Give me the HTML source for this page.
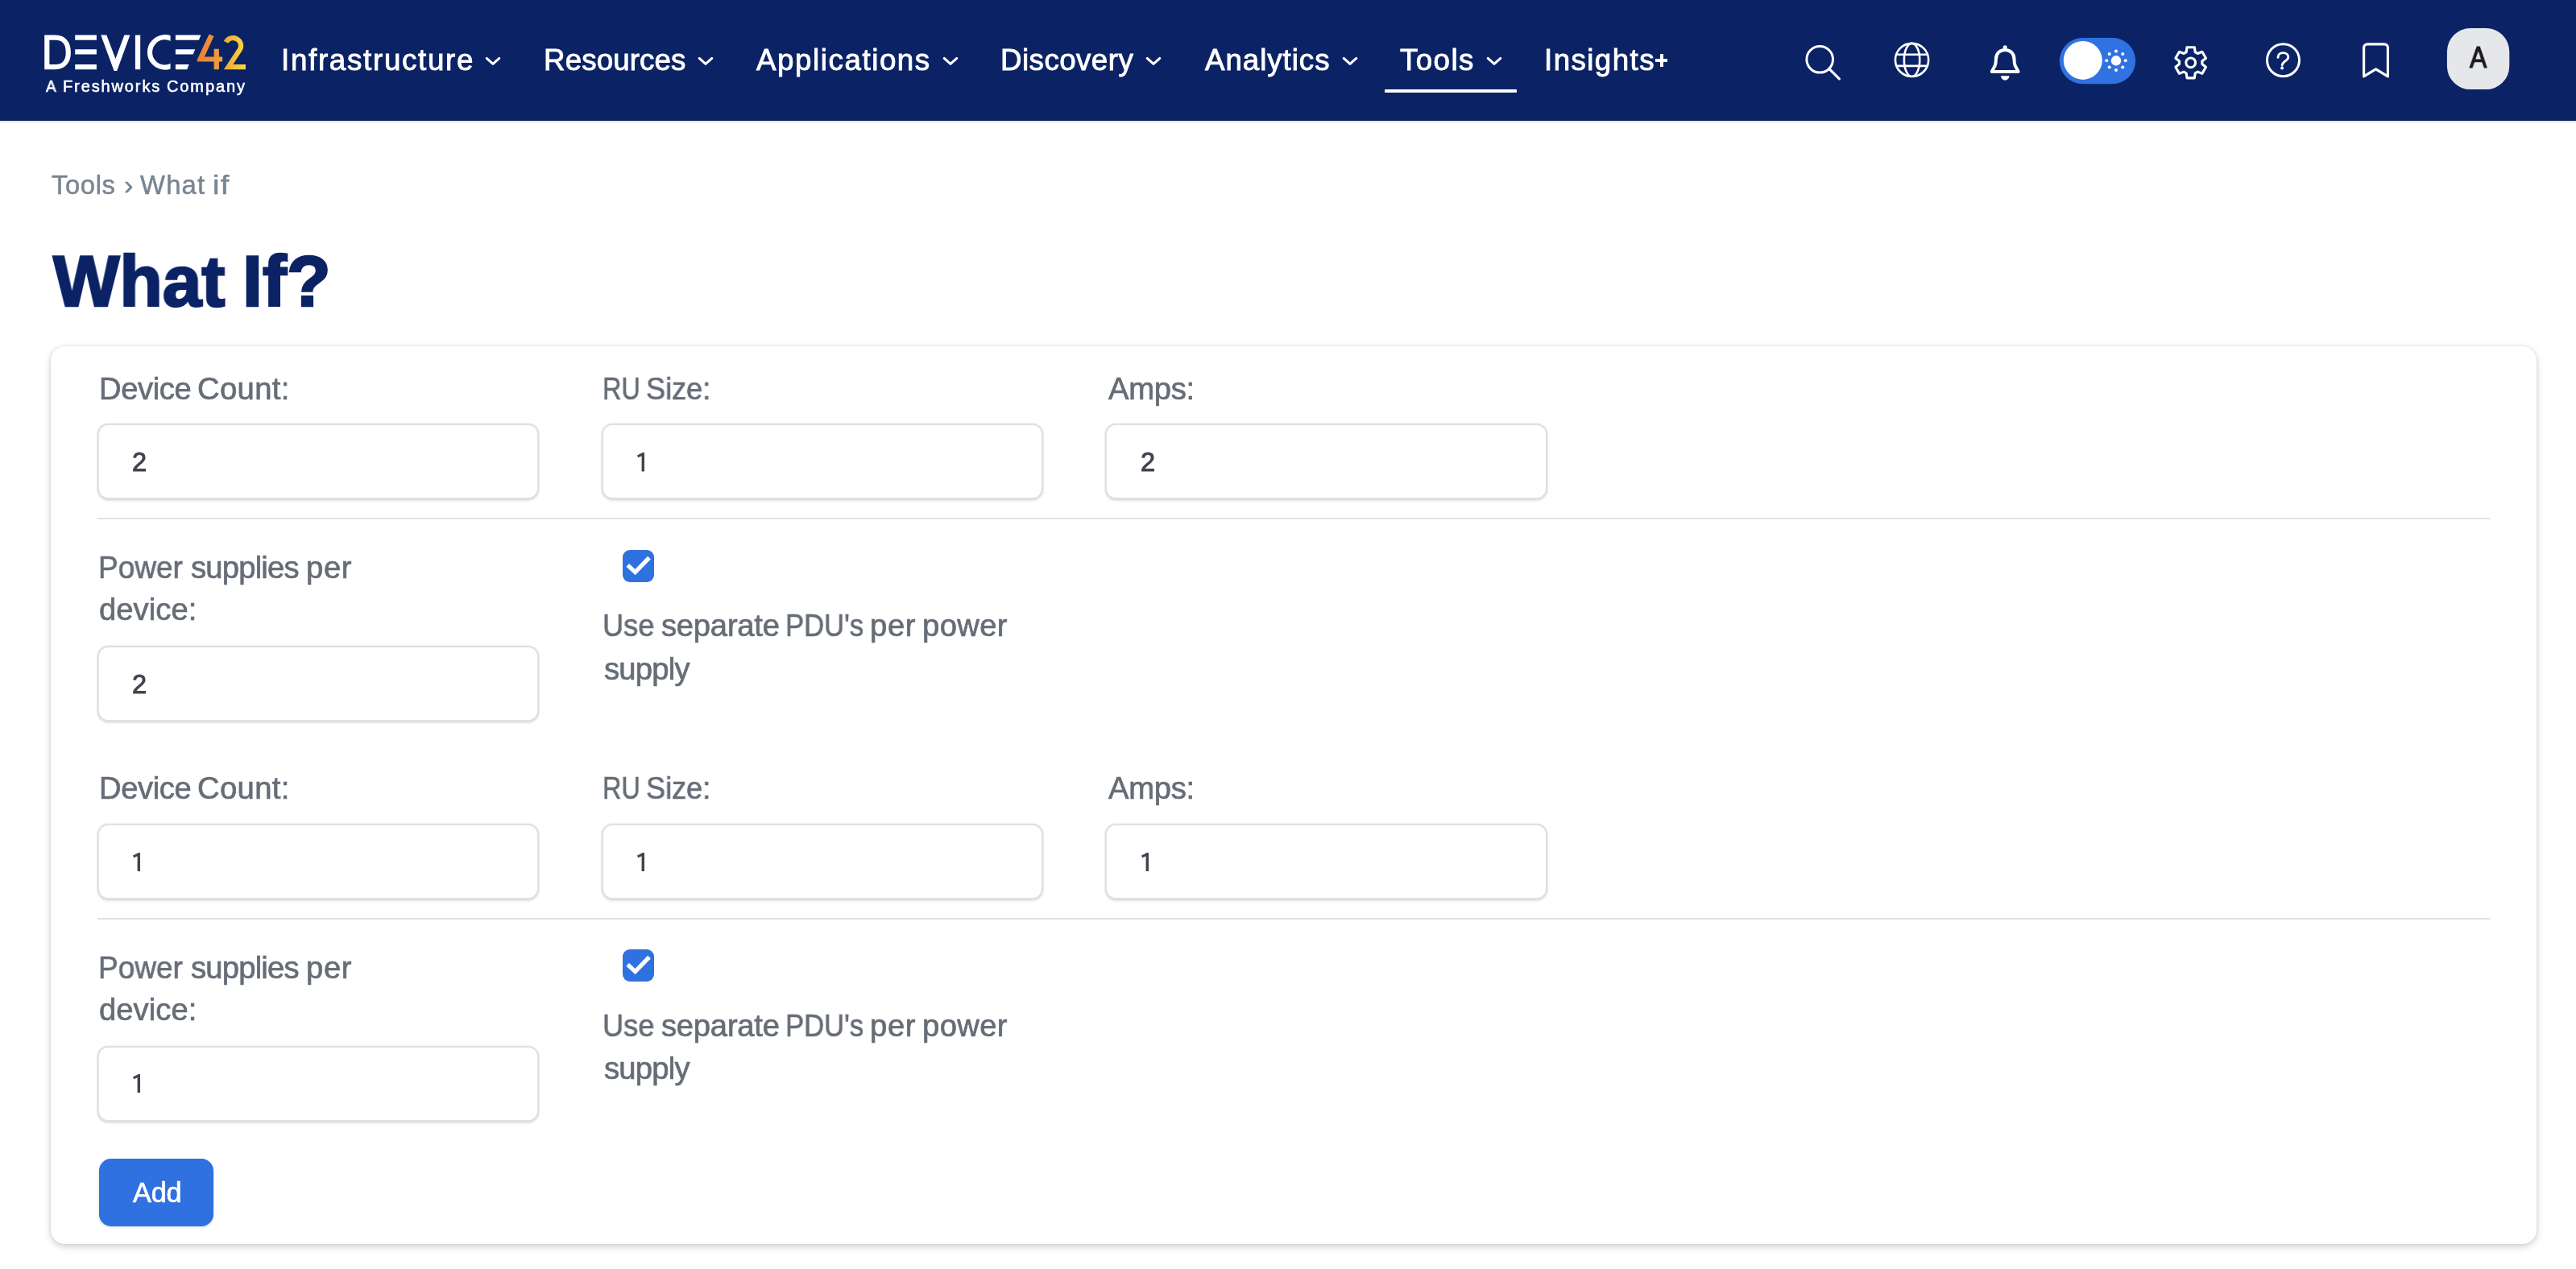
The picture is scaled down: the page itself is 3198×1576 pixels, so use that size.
<!DOCTYPE html>
<html lang="en"><head><meta charset="utf-8"><title>What If? | Device42</title>
<style>
html,body{margin:0;padding:0;}
body{width:3198px;height:1576px;overflow:hidden;background:#fff;position:relative;font-family:"Liberation Sans",sans-serif;}
.t{position:absolute;white-space:pre;font-family:"Liberation Sans",sans-serif;will-change:transform;}
.abs{position:absolute;}
#nav{position:absolute;left:0;top:0;width:3198px;height:150px;background:#0b2365;}
#navline{position:absolute;left:0;top:150px;width:3198px;height:2px;background:#e3e7ef;}
.chev{position:absolute;width:24px;height:16px;}
#card{position:absolute;left:62.7px;top:429.7px;width:3086.6px;height:1115.3px;background:#fff;border-radius:17.5px;box-shadow:0 3px 10px rgba(0,0,0,.19),0 0 3px rgba(0,0,0,.10);}
.inp{position:absolute;box-sizing:border-box;width:548.6px;height:94px;border:2.1px solid #e0e0e2;border-radius:13.5px;background:#fff;box-shadow:0 1.6px 3px rgba(0,0,0,.11),0 0 2.5px rgba(0,0,0,.10);}
.hr{position:absolute;left:121.4px;width:2969.4px;height:2px;background:#dde1e8;}
.cb{position:absolute;width:39.5px;height:40px;border-radius:9px;background:#3071e0;}
#add{position:absolute;left:122.6px;top:1438.7px;width:142.6px;height:84.2px;border-radius:15px;background:#2f71e0;box-shadow:0 1px 3px rgba(0,0,0,.18);}
</style></head><body>

<div id="nav">
<svg class="abs" style="left:0;top:0" width="3198" height="150" viewBox="0 0 3198 150">
<defs><linearGradient id="g42" gradientUnits="userSpaceOnUse" x1="189" y1="0" x2="250" y2="0"><stop offset="0" stop-color="#e97d38"/><stop offset="0.45" stop-color="#eb9c3b"/><stop offset="1" stop-color="#fbd83c"/></linearGradient>
<clipPath id="cc"><rect x="120" y="-5" width="36.6" height="55"/></clipPath></defs>
<g transform="translate(55,43)">
<path d="M3.3 3.7 H13.8 C24.4 3.7 29.8 11 29.8 21.9 C29.8 32.8 24.4 40.1 13.8 40.1 H3.3 Z" fill="none" stroke="#fff" stroke-width="6.2" stroke-linejoin="miter"/>
<path d="M38.2 0.6 H64.9 V6.8 H38.2 Z M38.2 18.3 H64.9 V24.5 H38.2 Z M38.2 37 H64.9 V43.2 H38.2 Z" fill="#fff"/>
<path d="M70.2 0.6 H77.3 L88.4 30 L99.4 0.6 H106.4 L90.2 44.9 H86.6 Z" fill="#fff"/>
<rect x="112.9" y="0.6" width="6.3" height="42.6" fill="#fff"/>
<g clip-path="url(#cc)"><path d="M161 7 A18.7 18.7 0 1 0 161 36.8" transform="translate(0,0)" fill="none" stroke="#fff" stroke-width="6.2"/></g>
<path d="M162.9 0.6 H194.4 L191.9 6.8 H162.9 Z M162.9 18.3 H187.2 L184.7 24.5 H162.9 Z M162.9 37 H179.7 L177.2 43.2 H162.9 Z" fill="#fff"/>
<path d="M204.6 -0.6 L210.5 2 L198.8 27.6 H210.6 V17.7 H216.9 V27.6 H221.1 V33.4 H216.9 V43.3 H210.6 V33.4 H189.7 V31.2 Z" fill="url(#g42)"/>
<path d="M225.6 9.4 A9.7 9.7 0 1 1 243.0 18.3 L228.6 40.1 H249.9" fill="none" stroke="url(#g42)" stroke-width="6.2" stroke-linejoin="miter" stroke-miterlimit="4"/>
</g>
</svg>
<span class="t" style="left:56.91px;top:97.40px;font-size:20.0px;line-height:20.0px;color:#fff;transform:scaleX(0.9493);transform-origin:0 0;-webkit-text-stroke:0.55px #fff;">A</span><span class="t" style="left:77.82px;top:97.40px;font-size:20.0px;line-height:20.0px;color:#fff;letter-spacing:1.883px;-webkit-text-stroke:0.55px #fff;">Freshworks</span><span class="t" style="left:206.88px;top:97.40px;font-size:20.0px;line-height:20.0px;color:#fff;letter-spacing:1.883px;-webkit-text-stroke:0.55px #fff;">Company</span>
<span class="t" style="left:349.06px;top:57.35px;font-size:36.7px;line-height:36.7px;color:#fff;letter-spacing:1.715px;-webkit-text-stroke:0.9px #fff;">Infrastructure</span>
<span class="t" style="left:675.12px;top:57.35px;font-size:36.7px;line-height:36.7px;color:#fff;letter-spacing:0.136px;-webkit-text-stroke:0.9px #fff;">Resources</span>
<span class="t" style="left:938.96px;top:57.35px;font-size:36.7px;line-height:36.7px;color:#fff;letter-spacing:1.579px;-webkit-text-stroke:0.9px #fff;">Applications</span>
<span class="t" style="left:1241.62px;top:57.35px;font-size:36.7px;line-height:36.7px;color:#fff;letter-spacing:0.463px;-webkit-text-stroke:0.9px #fff;">Discovery</span>
<span class="t" style="left:1496.06px;top:57.35px;font-size:36.7px;line-height:36.7px;color:#fff;letter-spacing:0.961px;-webkit-text-stroke:0.9px #fff;">Analytics</span>
<span class="t" style="left:1738.32px;top:57.35px;font-size:36.7px;line-height:36.7px;color:#fff;letter-spacing:1.429px;-webkit-text-stroke:0.9px #fff;">Tools</span>
<span class="t" style="left:1917.06px;top:57.35px;font-size:36.7px;line-height:36.7px;color:#fff;letter-spacing:1.437px;-webkit-text-stroke:0.9px #fff;">Insights</span>
<svg class="chev" style="left:600.35px;top:68px" viewBox="0 0 24 16"><path d="M4.2 4.4 L12 11.4 L19.8 4.4" fill="none" stroke="#fff" stroke-width="3" stroke-linecap="round" stroke-linejoin="round"/></svg>
<svg class="chev" style="left:864.25px;top:68px" viewBox="0 0 24 16"><path d="M4.2 4.4 L12 11.4 L19.8 4.4" fill="none" stroke="#fff" stroke-width="3" stroke-linecap="round" stroke-linejoin="round"/></svg>
<svg class="chev" style="left:1167.55px;top:68px" viewBox="0 0 24 16"><path d="M4.2 4.4 L12 11.4 L19.8 4.4" fill="none" stroke="#fff" stroke-width="3" stroke-linecap="round" stroke-linejoin="round"/></svg>
<svg class="chev" style="left:1420.35px;top:68px" viewBox="0 0 24 16"><path d="M4.2 4.4 L12 11.4 L19.8 4.4" fill="none" stroke="#fff" stroke-width="3" stroke-linecap="round" stroke-linejoin="round"/></svg>
<svg class="chev" style="left:1663.65px;top:68px" viewBox="0 0 24 16"><path d="M4.2 4.4 L12 11.4 L19.8 4.4" fill="none" stroke="#fff" stroke-width="3" stroke-linecap="round" stroke-linejoin="round"/></svg>
<svg class="chev" style="left:1842.55px;top:68px" viewBox="0 0 24 16"><path d="M4.2 4.4 L12 11.4 L19.8 4.4" fill="none" stroke="#fff" stroke-width="3" stroke-linecap="round" stroke-linejoin="round"/></svg>
<div class="abs" style="left:1719.2px;top:111px;width:163.8px;height:4.2px;background:#fff;border-radius:1px"></div>
<div class="abs" style="left:2055.3px;top:73.4px;width:15.1px;height:3.9px;background:#fff"></div><div class="abs" style="left:2060.8px;top:67.2px;width:4.1px;height:15.9px;background:#fff"></div>
<svg class="abs" style="left:2200px;top:0" width="998" height="150" viewBox="2200 0 998 150" fill="none" stroke="#fff" stroke-linecap="round" stroke-linejoin="round">
<circle cx="2259.2" cy="73.8" r="16.3" stroke-width="3"/><path d="M2270.9 85.5 L2283.4 97.9" stroke-width="3.2"/>
<g stroke-width="2.6"><circle cx="2373.55" cy="74.45" r="20.6"/><ellipse cx="2373.55" cy="74.45" rx="9.7" ry="20.6"/><path d="M2355.2 67.7 H2391.9 M2355.2 81.9 H2391.9" stroke-linecap="butt"/></g>
<path d="M2472.8 88.9 L2476.6 81.6 C2477.6 79.3 2477.9 76.5 2477.9 73.4 C2477.9 66.6 2482.6 62.1 2489.2 62.1 C2495.8 62.1 2500.5 66.6 2500.5 73.4 C2500.5 76.5 2500.8 79.3 2501.8 81.6 L2505.6 88.9 Z" stroke-width="4"/>
<circle cx="2489.2" cy="58.7" r="2.5" fill="#fff" stroke="none"/><path d="M2483.9 94.3 A5.3 5.4 0 0 0 2494.5 94.3 Z" fill="#fff" stroke="none"/>
<rect x="2556.8" y="47" width="94.4" height="57.2" rx="28.6" fill="#3172e1" stroke="none"/><circle cx="2585.8" cy="74.9" r="24" fill="#fff" stroke="none"/>
<circle cx="2627" cy="75.3" r="6.2" fill="#fff" stroke="none"/>
<circle cx="2638.70" cy="75.30" r="2.05" fill="#fff" stroke="none"/>
<circle cx="2635.27" cy="83.57" r="2.05" fill="#fff" stroke="none"/>
<circle cx="2627.00" cy="87.00" r="2.05" fill="#fff" stroke="none"/>
<circle cx="2618.73" cy="83.57" r="2.05" fill="#fff" stroke="none"/>
<circle cx="2615.30" cy="75.30" r="2.05" fill="#fff" stroke="none"/>
<circle cx="2618.73" cy="67.03" r="2.05" fill="#fff" stroke="none"/>
<circle cx="2627.00" cy="63.60" r="2.05" fill="#fff" stroke="none"/>
<circle cx="2635.27" cy="67.03" r="2.05" fill="#fff" stroke="none"/>
<path d="M2714.17 64.72 L2715.04 58.76 L2724.36 58.76 L2725.23 64.72 A14.2 14.2 0 0 1 2728.26 66.47 L2733.86 64.25 L2738.52 72.32 L2733.79 76.05 A14.2 14.2 0 0 1 2733.79 79.55 L2738.52 83.28 L2733.86 91.35 L2728.26 89.13 A14.2 14.2 0 0 1 2725.23 90.88 L2724.36 96.84 L2715.04 96.84 L2714.17 90.88 A14.2 14.2 0 0 1 2711.14 89.13 L2705.54 91.35 L2700.88 83.28 L2705.61 79.55 A14.2 14.2 0 0 1 2705.61 76.05 L2700.88 72.32 L2705.54 64.25 L2711.14 66.47 A14.2 14.2 0 0 1 2714.17 64.72 Z" stroke-width="3.1"/><circle cx="2719.7" cy="77.8" r="5.9" stroke-width="3"/>
<circle cx="2834.5" cy="74.7" r="20" stroke-width="3"/><path d="M2828 71.4 C2828 67.8 2830.8 65.6 2834.3 65.6 C2838.2 65.6 2840.8 68 2840.8 71 C2840.8 75.6 2833.2 76.2 2833.2 81" stroke-width="2.9"/><circle cx="2833.1" cy="84.5" r="2" fill="#fff" stroke="none"/>
<path d="M2934.6 94.9 V59.2 a4.4 4.4 0 0 1 4.4 -4.4 H2960 a4.4 4.4 0 0 1 4.4 4.4 V94.9 L2949.5 85.9 Z" stroke-width="3.2" stroke-linejoin="round"/>
<rect x="3037.9" y="35" width="77.4" height="76.1" rx="29" fill="#e6e7eb" stroke="none"/>
</svg>
<span class="t" style="left:3065.65px;top:54.40px;font-size:36.2px;line-height:36.2px;color:#1b1b1b;transform:scaleX(0.8816);transform-origin:0 0;-webkit-text-stroke:1.2px #1b1b1b;">A</span>
</div><div id="navline"></div>
<span class="t" style="left:64.41px;top:214.00px;font-size:32.8px;line-height:32.8px;color:#788592;letter-spacing:0.600px;-webkit-text-stroke:0.5px #788592;">Tools</span><span class="t" style="left:154.01px;top:214.00px;font-size:32.8px;line-height:32.8px;color:#788592;transform:scaleX(1.0443);transform-origin:0 0;-webkit-text-stroke:0.5px #788592;">›</span><span class="t" style="left:174.19px;top:214.00px;font-size:32.8px;line-height:32.8px;color:#788592;letter-spacing:1.201px;-webkit-text-stroke:0.5px #788592;">What</span><span class="t" style="left:263.92px;top:214.00px;font-size:32.8px;line-height:32.8px;color:#788592;letter-spacing:1.200px;transform:scaleX(1.1586);transform-origin:0 0;-webkit-text-stroke:0.5px #788592;">if</span>
<span class="t" style="left:66.17px;top:304.65px;font-size:89.5px;line-height:89.5px;color:#0b2365;transform:scaleX(0.9751);transform-origin:0 0;font-weight:700;-webkit-text-stroke:2.6px #0b2365;">What</span><span class="t" style="left:301.16px;top:304.65px;font-size:89.5px;line-height:89.5px;color:#0b2365;letter-spacing:0.199px;font-weight:700;-webkit-text-stroke:2.6px #0b2365;">If?</span>
<div id="card"></div>
<span class="t" style="left:122.90px;top:463.50px;font-size:38.2px;line-height:38.2px;color:#676d77;letter-spacing:-0.405px;-webkit-text-stroke:0.7px #676d77;">Device</span><span class="t" style="left:244.64px;top:463.50px;font-size:38.2px;line-height:38.2px;color:#676d77;letter-spacing:0.390px;-webkit-text-stroke:0.7px #676d77;">Count:</span>
<span class="t" style="left:748.42px;top:463.50px;font-size:38.2px;line-height:38.2px;color:#676d77;transform:scaleX(0.8496);transform-origin:0 0;-webkit-text-stroke:0.7px #676d77;">RU</span><span class="t" style="left:801.51px;top:463.50px;font-size:38.2px;line-height:38.2px;color:#676d77;transform:scaleX(0.9448);transform-origin:0 0;-webkit-text-stroke:0.7px #676d77;">Size:</span>
<span class="t" style="left:1376.05px;top:463.50px;font-size:38.2px;line-height:38.2px;color:#676d77;letter-spacing:-0.292px;-webkit-text-stroke:0.7px #676d77;">Amps:</span>
<div class="inp" style="left:120.9px;top:526.3px"></div>
<span class="t" style="left:164.28px;top:558.45px;font-size:32.5px;line-height:32.5px;color:#3f444e;-webkit-text-stroke:1.0px #3f444e;">2</span>
<div class="inp" style="left:746.5px;top:526.3px"></div>
<svg class="abs" style="left:790.80px;top:562.05px" width="9.2" height="23.5" viewBox="0 0 9.2 23.5"><path d="M9.06 0V23.4H5.6V4.2L1.18 6.35 0 3.55 6.9 0Z" fill="#3f444e"/></svg>
<div class="inp" style="left:1372.2px;top:526.3px"></div>
<span class="t" style="left:1415.58px;top:558.45px;font-size:32.5px;line-height:32.5px;color:#3f444e;-webkit-text-stroke:1.0px #3f444e;">2</span>
<div class="hr" style="top:643.0px"></div>
<span class="t" style="left:122.19px;top:686.40px;font-size:38.2px;line-height:38.2px;color:#676d77;transform:scaleX(0.9689);transform-origin:0 0;-webkit-text-stroke:0.7px #676d77;">Power</span><span class="t" style="left:237.30px;top:686.40px;font-size:38.2px;line-height:38.2px;color:#676d77;letter-spacing:-0.787px;-webkit-text-stroke:0.7px #676d77;">supplies</span><span class="t" style="left:380.47px;top:686.40px;font-size:38.2px;line-height:38.2px;color:#676d77;letter-spacing:0.678px;-webkit-text-stroke:0.7px #676d77;">per</span>
<span class="t" style="left:123.03px;top:738.30px;font-size:38.2px;line-height:38.2px;color:#676d77;letter-spacing:0.060px;-webkit-text-stroke:0.7px #676d77;">device:</span>
<div class="inp" style="left:120.9px;top:802.3px"></div>
<span class="t" style="left:164.28px;top:833.75px;font-size:32.5px;line-height:32.5px;color:#3f444e;-webkit-text-stroke:1.0px #3f444e;">2</span>
<div class="cb" style="left:772.7px;top:682.7px"><svg width="39.5" height="40" viewBox="0 0 39.5 40"><path d="M6.2 18.8 L15.6 27.6 L33 9.6" fill="none" stroke="#fff" stroke-width="5.2" stroke-linecap="butt" stroke-linejoin="miter"/></svg></div>
<span class="t" style="left:747.72px;top:758.20px;font-size:38.2px;line-height:38.2px;color:#676d77;transform:scaleX(0.9482);transform-origin:0 0;-webkit-text-stroke:0.7px #676d77;">Use</span><span class="t" style="left:820.50px;top:758.20px;font-size:38.2px;line-height:38.2px;color:#676d77;letter-spacing:-0.232px;-webkit-text-stroke:0.7px #676d77;">separate</span><span class="t" style="left:975.16px;top:758.20px;font-size:38.2px;line-height:38.2px;color:#676d77;transform:scaleX(0.9064);transform-origin:0 0;-webkit-text-stroke:0.7px #676d77;">PDU's</span><span class="t" style="left:1079.97px;top:758.20px;font-size:38.2px;line-height:38.2px;color:#676d77;letter-spacing:0.679px;-webkit-text-stroke:0.7px #676d77;">per</span><span class="t" style="left:1145.27px;top:758.20px;font-size:38.2px;line-height:38.2px;color:#676d77;letter-spacing:0.389px;-webkit-text-stroke:0.7px #676d77;">power</span>
<span class="t" style="left:749.50px;top:811.60px;font-size:38.2px;line-height:38.2px;color:#676d77;letter-spacing:-0.770px;-webkit-text-stroke:0.7px #676d77;">supply</span>
<span class="t" style="left:122.90px;top:960.00px;font-size:38.2px;line-height:38.2px;color:#676d77;letter-spacing:-0.405px;-webkit-text-stroke:0.7px #676d77;">Device</span><span class="t" style="left:244.64px;top:960.00px;font-size:38.2px;line-height:38.2px;color:#676d77;letter-spacing:0.390px;-webkit-text-stroke:0.7px #676d77;">Count:</span>
<span class="t" style="left:748.42px;top:960.00px;font-size:38.2px;line-height:38.2px;color:#676d77;transform:scaleX(0.8496);transform-origin:0 0;-webkit-text-stroke:0.7px #676d77;">RU</span><span class="t" style="left:801.51px;top:960.00px;font-size:38.2px;line-height:38.2px;color:#676d77;transform:scaleX(0.9448);transform-origin:0 0;-webkit-text-stroke:0.7px #676d77;">Size:</span>
<span class="t" style="left:1376.05px;top:960.00px;font-size:38.2px;line-height:38.2px;color:#676d77;letter-spacing:-0.292px;-webkit-text-stroke:0.7px #676d77;">Amps:</span>
<div class="inp" style="left:120.9px;top:1022.8px"></div>
<svg class="abs" style="left:165.20px;top:1058.55px" width="9.2" height="23.5" viewBox="0 0 9.2 23.5"><path d="M9.06 0V23.4H5.6V4.2L1.18 6.35 0 3.55 6.9 0Z" fill="#3f444e"/></svg>
<div class="inp" style="left:746.5px;top:1022.8px"></div>
<svg class="abs" style="left:790.80px;top:1058.55px" width="9.2" height="23.5" viewBox="0 0 9.2 23.5"><path d="M9.06 0V23.4H5.6V4.2L1.18 6.35 0 3.55 6.9 0Z" fill="#3f444e"/></svg>
<div class="inp" style="left:1372.2px;top:1022.8px"></div>
<svg class="abs" style="left:1416.50px;top:1058.55px" width="9.2" height="23.5" viewBox="0 0 9.2 23.5"><path d="M9.06 0V23.4H5.6V4.2L1.18 6.35 0 3.55 6.9 0Z" fill="#3f444e"/></svg>
<div class="hr" style="top:1139.5px"></div>
<span class="t" style="left:122.19px;top:1182.90px;font-size:38.2px;line-height:38.2px;color:#676d77;transform:scaleX(0.9689);transform-origin:0 0;-webkit-text-stroke:0.7px #676d77;">Power</span><span class="t" style="left:237.30px;top:1182.90px;font-size:38.2px;line-height:38.2px;color:#676d77;letter-spacing:-0.787px;-webkit-text-stroke:0.7px #676d77;">supplies</span><span class="t" style="left:380.47px;top:1182.90px;font-size:38.2px;line-height:38.2px;color:#676d77;letter-spacing:0.678px;-webkit-text-stroke:0.7px #676d77;">per</span>
<span class="t" style="left:123.03px;top:1234.80px;font-size:38.2px;line-height:38.2px;color:#676d77;letter-spacing:0.060px;-webkit-text-stroke:0.7px #676d77;">device:</span>
<div class="inp" style="left:120.9px;top:1298.8px"></div>
<svg class="abs" style="left:165.20px;top:1333.85px" width="9.2" height="23.5" viewBox="0 0 9.2 23.5"><path d="M9.06 0V23.4H5.6V4.2L1.18 6.35 0 3.55 6.9 0Z" fill="#3f444e"/></svg>
<div class="cb" style="left:772.7px;top:1179.2px"><svg width="39.5" height="40" viewBox="0 0 39.5 40"><path d="M6.2 18.8 L15.6 27.6 L33 9.6" fill="none" stroke="#fff" stroke-width="5.2" stroke-linecap="butt" stroke-linejoin="miter"/></svg></div>
<span class="t" style="left:747.72px;top:1254.70px;font-size:38.2px;line-height:38.2px;color:#676d77;transform:scaleX(0.9482);transform-origin:0 0;-webkit-text-stroke:0.7px #676d77;">Use</span><span class="t" style="left:820.50px;top:1254.70px;font-size:38.2px;line-height:38.2px;color:#676d77;letter-spacing:-0.232px;-webkit-text-stroke:0.7px #676d77;">separate</span><span class="t" style="left:975.16px;top:1254.70px;font-size:38.2px;line-height:38.2px;color:#676d77;transform:scaleX(0.9064);transform-origin:0 0;-webkit-text-stroke:0.7px #676d77;">PDU's</span><span class="t" style="left:1079.97px;top:1254.70px;font-size:38.2px;line-height:38.2px;color:#676d77;letter-spacing:0.679px;-webkit-text-stroke:0.7px #676d77;">per</span><span class="t" style="left:1145.27px;top:1254.70px;font-size:38.2px;line-height:38.2px;color:#676d77;letter-spacing:0.389px;-webkit-text-stroke:0.7px #676d77;">power</span>
<span class="t" style="left:749.50px;top:1308.10px;font-size:38.2px;line-height:38.2px;color:#676d77;letter-spacing:-0.770px;-webkit-text-stroke:0.7px #676d77;">supply</span>
<div id="add"></div>
<span class="t" style="left:165.26px;top:1464.40px;font-size:34.2px;line-height:34.2px;color:#fff;letter-spacing:-0.134px;-webkit-text-stroke:0.7px #fff;">Add</span>
</body></html>
